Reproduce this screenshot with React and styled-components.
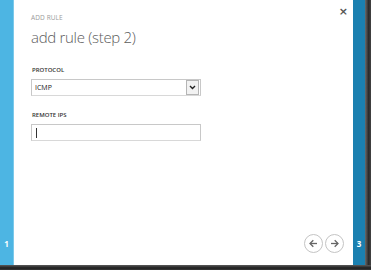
import React from "react";
import styled, { createGlobalStyle } from "styled-components";

const GlobalStyle = createGlobalStyle`
  html, body {
    margin: 0;
    padding: 0;
    background: #2e2e2e;
  }
  #root {
    width: 371px;
    height: 270px;
  }
`;

const Wrapper = styled.div`
  width: 371px;
  height: 270px;
  display: flex;
  flex-direction: column;
  font-family: "Open Sans", "Noto Sans", sans-serif;
`;

const Frame = styled.div`
  display: flex;
  height: 265px;
`;

const BottomShadow = styled.div`
  height: 5px;
  background: linear-gradient(#5a5a5a, #1e1e1e 60%, #3a3a3a);
`;

const SideBar = styled.div`
  width: ${(p) => p.$w}px;
  background: ${(p) => p.$color};
  border-right: ${(p) => (p.$edge ? "1px solid #7cc9ea" : "none")};
  display: flex;
  flex-direction: column;
  justify-content: flex-end;
  align-items: center;
  padding-bottom: 16px;
  box-sizing: border-box;
`;

const StepNum = styled.span`
  color: #fff;
  font-family: "Open Sans", sans-serif;
  font-size: 8px;
  font-weight: 700;
  line-height: 10px;
`;

const RightShadow = styled.div`
  width: 6px;
  background: linear-gradient(90deg, #6a6a6a, #2a2a2a 60%, #444);
`;

const Main = styled.div`
  flex: 1;
  background: #fff;
  display: flex;
  flex-direction: column;
  padding: 14px 0 0 17px;
  position: relative;
`;

const Close = styled.button`
  position: absolute;
  top: 6px;
  right: 5px;
  border: none;
  background: transparent;
  padding: 0;
  font-size: 11px;
  font-weight: 700;
  line-height: 12px;
  color: #555;
  font-family: "DejaVu Sans", sans-serif;
`;

const Caption = styled.div`
  font-size: 6.5px;
  color: #9a9a9a;
  letter-spacing: 0.1px;
  line-height: 8px;
`;

const Title = styled.h1`
  margin: 4px 0 0 0;
  font-size: 15px;
  font-weight: 300;
  color: #5c5c5c;
  line-height: 22px;
  letter-spacing: -0.3px;
`;

const Label = styled.div`
  font-size: 6px;
  font-weight: 600;
  color: #333;
  line-height: 8px;
  margin-top: ${(p) => p.$top}px;
  margin-left: 1px;
`;

const Field = styled.div`
  width: 170px;
  height: 17px;
  box-sizing: border-box;
  border: 1px solid #c8c8c8;
  border-bottom-color: #d8d8d8;
  margin-top: 5px;
  display: flex;
  align-items: center;
  padding-left: 3px;
  font-size: 7px;
  color: #222;
`;

const FieldText = styled.span`
  flex: 1;
`;

const DropBtn = styled.span`
  width: 11px;
  height: 13px;
  margin-right: 1px;
  border: 1px solid #b5b5b5;
  background: #f2f2f2;
  display: flex;
  align-items: center;
  justify-content: center;
`;

const Caret = styled.span`
  width: 1px;
  height: 10px;
  background: #333;
  margin-left: 1px;
`;

const NavRow = styled.div`
  margin-top: auto;
  margin-bottom: 12px;
  margin-right: 9px;
  display: flex;
  justify-content: flex-end;
  gap: 2px;
`;

const NavBtn = styled.span`
  width: 19px;
  height: 19px;
  box-sizing: border-box;
  border: 1px solid #c4c4c4;
  border-radius: 50%;
  display: flex;
  align-items: center;
  justify-content: center;
`;

const Arrow = ({ dir }) => (
  <svg width="9" height="9" viewBox="0 0 9 9">
    <g
      transform={dir === "left" ? "" : "translate(9,0) scale(-1,1)"}
      fill="none"
      stroke="#666"
      strokeWidth="1.3"
    >
      <path d="M1 4.5H8" />
      <path d="M4.3 1.2L1 4.5L4.3 7.8" />
    </g>
  </svg>
);

const App = () => (
  <>
    <GlobalStyle />
    <Wrapper>
      <Frame>
        <SideBar $w={14} $color="#4db5e3" $edge>
          <StepNum>1</StepNum>
        </SideBar>
        <Main>
          <Close>×</Close>
          <Caption>ADD RULE</Caption>
          <Title>add rule (step 2)</Title>
          <Label $top={18}>PROTOCOL</Label>
          <Field>
            <FieldText>ICMP</FieldText>
            <DropBtn>
              <svg width="7" height="5" viewBox="0 0 7 5">
                <path d="M1 1L3.5 3.5L6 1" fill="none" stroke="#222" strokeWidth="1.4" />
              </svg>
            </DropBtn>
          </Field>
          <Label $top={15}>REMOTE IPS</Label>
          <Field>
            <Caret />
          </Field>
          <NavRow>
            <NavBtn>
              <Arrow dir="left" />
            </NavBtn>
            <NavBtn>
              <Arrow dir="right" />
            </NavBtn>
          </NavRow>
        </Main>
        <SideBar $w={12} $color="#1b80b0">
          <StepNum>3</StepNum>
        </SideBar>
        <RightShadow />
      </Frame>
      <BottomShadow />
    </Wrapper>
  </>
);

export default App;
